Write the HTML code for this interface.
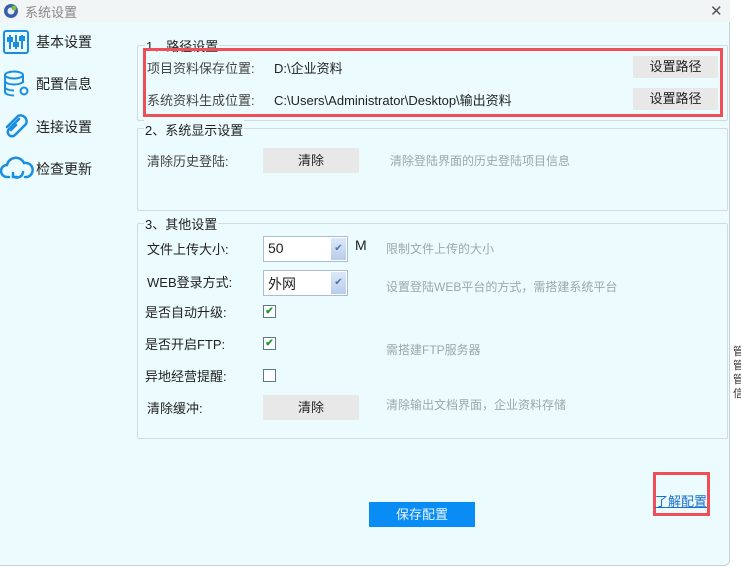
<!DOCTYPE html>
<html><head><meta charset="utf-8"><style>
*{margin:0;padding:0;box-sizing:border-box}
body{width:741px;height:569px;overflow:hidden;background:#fff;font-family:"Liberation Sans","Noto Sans CJK SC",sans-serif;font-size:13px;color:#222;position:relative}
.dlg{position:absolute;left:0;top:0;width:730px;height:566px;background:#ecfbfd;border-right:1px solid #c8d0d2;border-bottom:1px solid #c8d0d2;border-radius:0 0 6px 0}
.tb{position:absolute;left:0;top:0;width:730px;height:22px;background:#f1f5f6}
.a{position:absolute;white-space:nowrap}
.grp{position:absolute;border:1px solid #d2dadc;border-radius:2px}
.gt{position:absolute;background:#ecfbfd;padding:0 1px;font-size:13px;color:#222}
.btn{position:absolute;background:#e8e8e8;text-align:center;font-size:13px;color:#222}
.hint{position:absolute;color:#9aa;font-size:12px;white-space:nowrap}
.sel{position:absolute;width:85px;height:26px;border:1px solid #a9bed6;background:#fff;font-size:14px;padding:3px 0 0 4px}
.sel i{position:absolute;right:1px;top:1px;width:15px;height:22px;background:linear-gradient(#dbe8f7,#b9cdea);color:#4a73b3;font-style:normal;font-size:10px;text-align:center;line-height:22px}
.cb{position:absolute;width:13px;height:13px;border:1px solid #5a7a8a;background:#fff;font-size:10px;color:#1c9a2a;line-height:11px;text-align:center;font-weight:bold}
.nav{position:absolute;left:36px;font-size:14px;color:#222}
</style></head><body>
<div class="dlg">
<div class="tb"></div>
<svg class="a" style="left:3px;top:3px" width="16" height="16"><circle cx="8" cy="8" r="7" fill="#3a5fa8"/><circle cx="8" cy="8" r="3.5" fill="#e8eef5"/><circle cx="11" cy="5" r="2.5" fill="#7cbf4a"/></svg>
<div class="a" style="left:25px;top:2px;font-size:13px;color:#888">系统设置</div>
<div class="a" style="left:710px;top:2px;font-size:15px;color:#555">✕</div>

<svg class="a" style="left:3px;top:30px" width="26" height="24" fill="none" stroke="#1a8fe0" stroke-width="2"><rect x="1" y="1" width="24" height="22" rx="2"/><path d="M7 5v14M13 5v14M19 5v14"/><rect x="5" y="8" width="4" height="3" fill="#1a8fe0"/><rect x="11" y="13" width="4" height="3" fill="#1a8fe0"/><rect x="17" y="7" width="4" height="3" fill="#1a8fe0"/></svg>
<div class="nav" style="top:32px">基本设置</div>
<svg class="a" style="left:3px;top:70px" width="28" height="28" fill="none" stroke="#1a8fe0" stroke-width="2"><ellipse cx="11" cy="5" rx="9" ry="3.5"/><path d="M2 5v17c0 2 4 3.5 9 3.5M20 5v8M2 11c0 2 4 3.5 9 3.5s9-1.5 9-3.5M2 17c0 2 4 3.5 9 3.5"/><circle cx="21" cy="21" r="3.5"/></svg>
<div class="nav" style="top:74px">配置信息</div>
<svg class="a" style="left:2px;top:113px" width="28" height="28" fill="none" stroke="#1a8fe0" stroke-width="2.5" stroke-linecap="round"><path d="M17 6L7 16a4 4 0 0 0 6 6l11-11a6 6 0 0 0-8-8L5 14"/><path d="M14 12l-5 5"/></svg>
<div class="nav" style="top:117px">连接设置</div>
<svg class="a" style="left:0px;top:155px" width="34" height="28" fill="none" stroke="#1a8fe0" stroke-width="2.5" stroke-linecap="round"><path d="M9 22H7a6 6 0 0 1 0-12 9 9 0 0 1 17-2 7 7 0 0 1 3 14h-2"/><path d="M23 17a6 6 0 0 1-10 4M13 18v4h4"/></svg>
<div class="nav" style="top:159px">检查更新</div>

<div class="grp" style="left:137px;top:45px;width:591px;height:76px"></div>
<div class="gt" style="left:145px;top:36px">1、路径设置</div>
<div class="a" style="left:143px;top:48px;width:580px;height:69px;border:3px solid #ef4e57"></div>
<div class="a" style="left:147px;top:58px;color:#444">项目资料保存位置:</div>
<div class="a" style="left:274px;top:58px">D:\企业资料</div>
<div class="btn" style="left:633px;top:56px;width:85px;height:22px;line-height:22px">设置路径</div>
<div class="a" style="left:147px;top:90px;color:#444">系统资料生成位置:</div>
<div class="a" style="left:274px;top:90px">C:\Users\Administrator\Desktop\输出资料</div>
<div class="btn" style="left:633px;top:88px;width:85px;height:22px;line-height:22px">设置路径</div>

<div class="grp" style="left:137px;top:128px;width:591px;height:83px"></div>
<div class="gt" style="left:144px;top:120px">2、系统显示设置</div>
<div class="a" style="left:147px;top:151px;color:#444">清除历史登陆:</div>
<div class="btn" style="left:263px;top:148px;width:96px;height:25px;line-height:25px">清除</div>
<div class="hint" style="left:390px;top:152px">清除登陆界面的历史登陆项目信息</div>

<div class="grp" style="left:137px;top:223px;width:591px;height:216px"></div>
<div class="gt" style="left:144px;top:214px">3、其他设置</div>
<div class="a" style="left:147px;top:239px">文件上传大小:</div>
<div class="sel" style="left:263px;top:236px">50<i>✔</i></div>
<div class="a" style="left:355px;top:237px;font-size:14px">M</div>
<div class="hint" style="left:386px;top:240px">限制文件上传的大小</div>
<div class="a" style="left:147px;top:272px">WEB登录方式:</div>
<div class="sel" style="left:263px;top:270px">外网<i>✔</i></div>
<div class="hint" style="left:386px;top:278px">设置登陆WEB平台的方式，需搭建系统平台</div>
<div class="a" style="left:145px;top:302px">是否自动升级:</div>
<div class="cb" style="left:263px;top:305px">✔</div>
<div class="a" style="left:145px;top:334px">是否开启FTP:</div>
<div class="cb" style="left:263px;top:337px">✔</div>
<div class="hint" style="left:386px;top:341px">需搭建FTP服务器</div>
<div class="a" style="left:145px;top:366px">异地经营提醒:</div>
<div class="cb" style="left:263px;top:369px"></div>
<div class="a" style="left:147px;top:398px">清除缓冲:</div>
<div class="btn" style="left:263px;top:395px;width:96px;height:25px;line-height:25px">清除</div>
<div class="hint" style="left:386px;top:396px">清除输出文档界面，企业资料存储</div>

<div class="a" style="left:369px;top:502px;width:106px;height:25px;background:#0a8cf5;color:#e8f4ff;text-align:center;line-height:25px;font-size:13px">保存配置</div>
<div class="a" style="left:653px;top:472px;width:57px;height:44px;border:3px solid #ef4e57"></div>
<div class="a" style="left:655px;top:491px;color:#1a6fd0;text-decoration:underline;font-size:13px">了解配置</div>
</div>
<div class="a" style="left:733px;top:345px;font-size:11px;line-height:14px;color:#333;white-space:normal;width:10px">管<br>管<br>管<br>信</div>
</body></html>
